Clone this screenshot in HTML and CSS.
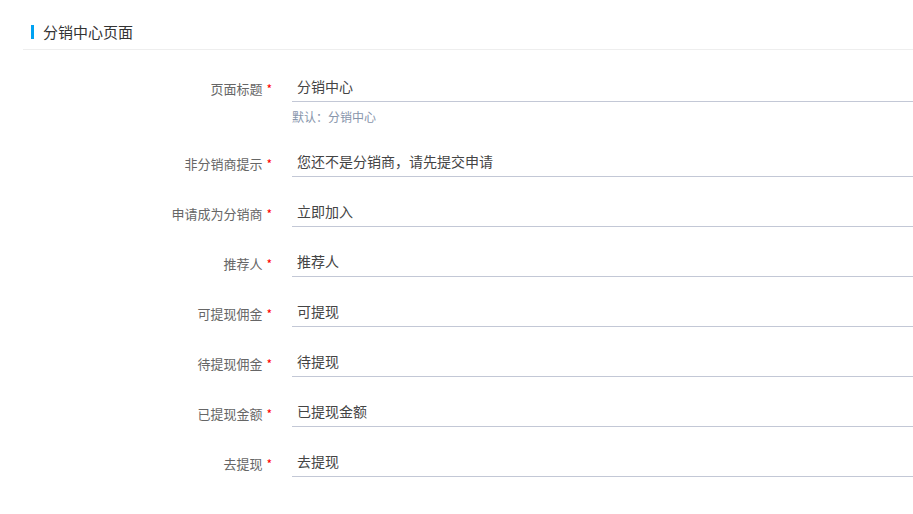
FILE: index.html
```html
<!DOCTYPE html>
<html lang="zh-CN">
<head>
    <meta charset="UTF-8">
    <meta name="viewport" content="width=device-width, initial-scale=1.0">
    <title>分销中心页面</title>
    <link rel="stylesheet" href="styles.css">
</head>
<body>
    <div class="page">
        <div class="page-header">
            <span class="page-title">分销中心页面</span>
        </div>

        <div class="form">
            <div class="form-item">
                <label class="form-label">页面标题<i class="req">*</i></label>
                <div class="form-field">
                    <input type="text" class="form-input" value="分销中心">
                    <div class="form-help">默认：分销中心</div>
                </div>
            </div>
            <div class="form-item">
                <label class="form-label">非分销商提示<i class="req">*</i></label>
                <div class="form-field">
                    <input type="text" class="form-input" value="您还不是分销商，请先提交申请">
                </div>
            </div>
            <div class="form-item">
                <label class="form-label">申请成为分销商<i class="req">*</i></label>
                <div class="form-field">
                    <input type="text" class="form-input" value="立即加入">
                </div>
            </div>
            <div class="form-item">
                <label class="form-label">推荐人<i class="req">*</i></label>
                <div class="form-field">
                    <input type="text" class="form-input" value="推荐人">
                </div>
            </div>
            <div class="form-item">
                <label class="form-label">可提现佣金<i class="req">*</i></label>
                <div class="form-field">
                    <input type="text" class="form-input" value="可提现">
                </div>
            </div>
            <div class="form-item">
                <label class="form-label">待提现佣金<i class="req">*</i></label>
                <div class="form-field">
                    <input type="text" class="form-input" value="待提现">
                </div>
            </div>
            <div class="form-item">
                <label class="form-label">已提现金额<i class="req">*</i></label>
                <div class="form-field">
                    <input type="text" class="form-input" value="已提现金额">
                </div>
            </div>
            <div class="form-item">
                <label class="form-label">去提现<i class="req">*</i></label>
                <div class="form-field">
                    <input type="text" class="form-input" value="去提现">
                </div>
            </div>
        </div>
    </div>
</body>
</html>
```

FILE: styles.css
```css
*{
    margin: 0;
    padding: 0;
    box-sizing: border-box;
}
body{
    font-family: "Noto Sans CJK SC", "Noto Sans", "Liberation Sans", sans-serif;
    background: #ffffff;
    color: #333333;
}

.page{
    padding-left: 23px;
}

/* 顶部标题 */
.page-header{
    height: 50px;
    border-bottom: 1px solid #eeeeee;
    padding: 19px 0 0 8px;
}
.page-title{
    display: inline-block;
    border-left: 3px solid #00a2f2;
    padding-left: 9px;
    font-size: 15px;
    line-height: 14px;
    color: #333333;
}

/* 表单 */
.form{
    padding-top: 21px;
}
.form-item{
    display: flex;
    align-items: flex-start;
    margin-bottom: 19px;
}
.form-label{
    width: 269px;
    padding-right: 20px;
    padding-top: 5px;
    text-align: right;
    font-size: 13px;
    line-height: 26px;
    color: #666666;
}
.req{
    font-style: normal;
    color: #ff0000;
    font-size: 12px;
    margin-left: 4px;
}
.form-field{
    flex: 1;
}
.form-input{
    display: block;
    width: 100%;
    height: 31px;
    border: none;
    border-bottom: 1px solid #c3c8d6;
    padding: 0 5px;
    font-family: inherit;
    font-size: 14px;
    color: #444444;
    outline: none;
    background: transparent;
}
.form-help{
    margin-top: 5px;
    font-size: 12px;
    line-height: 20px;
    color: #8795ab;
}
```
